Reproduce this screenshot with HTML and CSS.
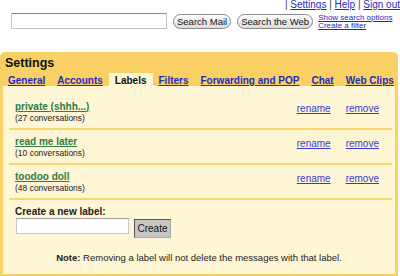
FILE: index.html
```html
<!DOCTYPE html>
<html lang="en">
<head>
  <meta charset="UTF-8" />
  <title>Settings - Labels</title>
  <link rel="stylesheet" href="styles.css">
</head>
<body>
  <div class="toplinks">
    | <a href="#">Settings</a> | <a href="#">Help</a> | <a href="#">Sign out</a>
  </div>

  <div class="search-row">
    <input class="search-box" type="text">
    <button class="pill">Search Mail</button>
    <button class="pill">Search the Web</button>
    <div class="search-opts">
      <a href="#">Show search options</a>
      <a href="#">Create a filter</a>
    </div>
  </div>

  <div class="settings-box">
    <div class="title">Settings</div>
    <div class="tabs">
      <a class="tab" href="#">General</a>
      <a class="tab" href="#">Accounts</a>
      <span class="tab active">Labels</span>
      <a class="tab" href="#">Filters</a>
      <a class="tab" href="#">Forwarding and POP</a>
      <a class="tab" href="#">Chat</a>
      <a class="tab" href="#">Web Clips</a>
    </div>

    <div class="panel">
      <div class="labels">
        <div class="label-row">
          <div>
            <a class="label-name" href="#">private (shhh...)</a>
            <div class="count">(27 conversations)</div>
          </div>
          <div class="actions"><a href="#">rename</a><a href="#">remove</a></div>
        </div>
        <div class="label-row">
          <div>
            <a class="label-name" href="#">read me later</a>
            <div class="count">(10 conversations)</div>
          </div>
          <div class="actions"><a href="#">rename</a><a href="#">remove</a></div>
        </div>
        <div class="label-row">
          <div>
            <a class="label-name" href="#">toodoo doll</a>
            <div class="count">(48 conversations)</div>
          </div>
          <div class="actions"><a href="#">rename</a><a href="#">remove</a></div>
        </div>

        <div class="create">
          <div class="create-title">Create a new label:</div>
          <div class="create-form">
            <input class="create-input" type="text">
            <button class="create-btn">Create</button>
          </div>
        </div>
      </div>

      <p class="note"><strong>Note:</strong> Removing a label will not delete the messages with that label.</p>
    </div>
  </div>
</body>
</html>
```

FILE: styles.css
```css
html, body {
  margin: 0;
  padding: 0;
  background: #fff;
  color: #222;
  font-family: "Liberation Sans", Arial, sans-serif;
  overflow: hidden;
}
a {
  color: #1f2bc4;
}
.toplinks {
  text-align: right;
  font-size: 10px;
  line-height: 10px;
  color: #444;
  white-space: nowrap;
}
.search-row {
  display: flex;
  align-items: center;
  margin: 3px 0 0 11px;
  height: 16px;
  white-space: nowrap;
}
.search-box {
  box-sizing: border-box;
  flex-shrink: 0;
  width: 156px;
  height: 16px;
  margin: 0;
  border: 1px solid #c4c4c4;
  border-top-color: #8c8c8c;
  background: #fff;
}
.pill {
  flex-shrink: 0;
  height: 15px;
  margin: 1px 0 0 6px;
  padding: 0 3px;
  border: 1px solid #8a8a8a;
  border-radius: 8px;
  background: linear-gradient(#ffffff, #dcdcdc);
  font-family: "Liberation Sans", Arial, sans-serif;
  font-size: 9.5px;
  line-height: 13px;
  color: #111;
  white-space: nowrap;
}
.search-opts {
  display: flex;
  flex-direction: column;
  flex-shrink: 0;
  margin: 2px 0 0 5px;
  font-size: 8px;
  line-height: 8px;
}
.settings-box {
  margin: 23px 2px 0 0;
  padding: 4px 3px 3px 3px;
  background: #f9d063;
  border-radius: 5px 5px 0 0;
}
.title {
  font-size: 12.5px;
  font-weight: bold;
  line-height: 14px;
  padding-left: 2px;
  color: #111;
}
.tabs {
  display: flex;
  margin: 3px 0 0 -1px;
  white-space: nowrap;
}
.tab {
  flex-shrink: 0;
  padding: 2px 6px 0;
  font-size: 10px;
  font-weight: bold;
  line-height: 11px;
}
.tab.active {
  background: #fff6d5;
  color: #111;
}
.panel {
  background: #fff6d5;
  padding: 9px 0 11px;
}
.labels {
  margin: 0 3px 0 6px;
}
.label-row {
  display: flex;
  justify-content: space-between;
  align-items: flex-start;
  padding: 5px 13px 5px 6px;
  border-bottom: 2px solid #fad86e;
}
.label-name {
  display: block;
  color: #2a7f47;
  font-size: 10px;
  font-weight: bold;
  line-height: 13px;
}
.count {
  font-size: 8.5px;
  line-height: 10px;
}
.actions {
  display: flex;
  gap: 15px;
  padding-top: 3px;
  font-size: 10px;
  line-height: 12px;
}
.actions a {
  color: #3a3acc;
}
.create {
  padding: 6px 0 0 6px;
}
.create-title {
  font-size: 10px;
  font-weight: bold;
  line-height: 12px;
}
.create-form {
  display: flex;
  align-items: flex-start;
  gap: 5px;
  margin-left: 1px;
}
.create-input {
  box-sizing: border-box;
  width: 113px;
  height: 16px;
  margin: 0;
  border: 1px solid #c8c8c8;
  border-top-color: #999;
  background: #fff;
}
.create-btn {
  box-sizing: border-box;
  width: 37px;
  height: 19px;
  margin: 1px 0 0;
  padding: 0;
  border: 1px solid #555;
  border-right-color: #aaa;
  border-bottom-color: #aaa;
  background: #c6c6c6;
  font-family: "Liberation Sans", Arial, sans-serif;
  font-size: 10px;
  color: #111;
}
.note {
  margin: 14px 0 0;
  text-align: center;
  font-size: 9.5px;
  line-height: 11px;
}
```
